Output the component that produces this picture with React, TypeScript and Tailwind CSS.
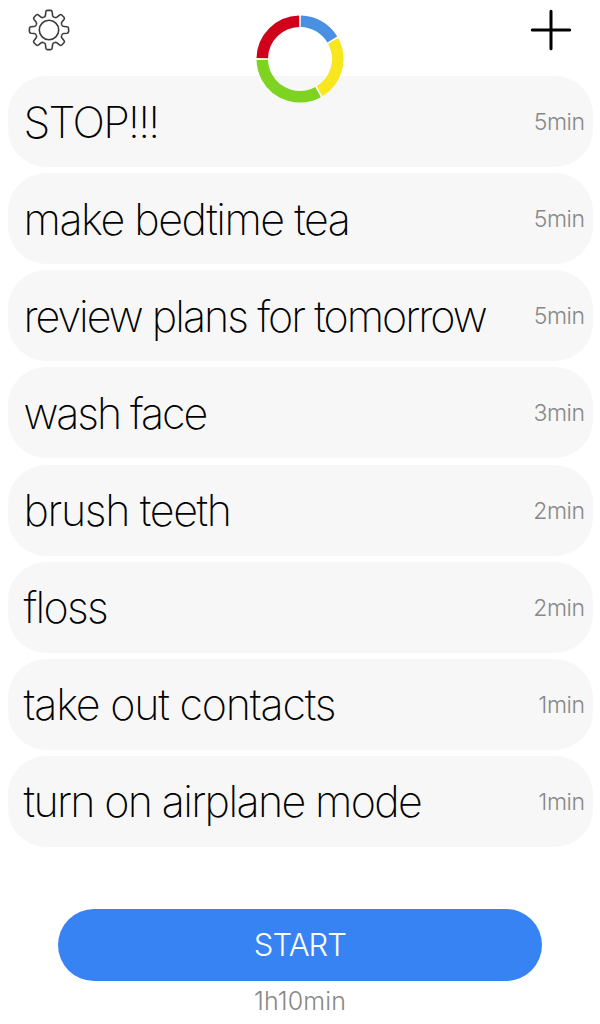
import React from 'react';
import clsx from 'clsx';

interface ITask {
  name: string;
  duration: string;
  tracking: string;
}

interface ISegment {
  color: string;
  start: number;
  end: number;
}

const tasks: ITask[] = [
  { name: 'STOP!!!', duration: '5min', tracking: 'tracking-[-1.7px]' },
  { name: 'make bedtime tea', duration: '5min', tracking: 'tracking-[-1.5px]' },
  { name: 'review plans for tomorrow', duration: '5min', tracking: 'tracking-[-1.98px]' },
  { name: 'wash face', duration: '3min', tracking: 'tracking-[-2.1px]' },
  { name: 'brush teeth', duration: '2min', tracking: 'tracking-[-1.35px]' },
  { name: 'floss', duration: '2min', tracking: 'tracking-[-1.7px]' },
  { name: 'take out contacts', duration: '1min', tracking: 'tracking-[-1.2px]' },
  { name: 'turn on airplane mode', duration: '1min', tracking: 'tracking-[-1.65px]' },
];

// degrees, clockwise from the top
const segments: ISegment[] = [
  { color: '#4a90e2', start: 0, end: 60 },
  { color: '#f8e71c', start: 60, end: 150 },
  { color: '#7ed321', start: 150, end: 270 },
  { color: '#d0021b', start: 270, end: 360 },
];

const teeth = [0, 45, 90, 135, 180, 225, 270, 315];

const GearIcon = () => (
  <svg viewBox="-22 -22 44 44" className="size-11" fill="none" stroke="#3c3c3c" strokeWidth="1.6">
    <circle r="9.7" />
    {teeth.map((angle) => (
      <path
        key={angle}
        transform={`rotate(${angle})`}
        d="M-5.25 -12.7C-4.2 -13.1 -3.6 -13.8 -3.5 -14.8L-3.2 -18Q-3 -19.6 -1.6 -19.6H1.6Q3 -19.6 3.2 -18L3.5 -14.8C3.6 -13.8 4.2 -13.1 5.25 -12.7"
      />
    ))}
  </svg>
);

const PlusIcon = () => (
  <svg viewBox="-22 -22 44 44" className="size-11" stroke="#000" strokeWidth="3" strokeLinecap="round">
    <path d="M-18.7 0H18.7M0 -18.7V18.7" />
  </svg>
);

const Ring = () => (
  <svg viewBox="-44 -44 88 88" className="size-[88px]" fill="none">
    <circle r="37.75" stroke="#fff" strokeWidth="11" />
    {segments.map(({ color, start, end }) => (
      <circle
        key={color}
        r="37.75"
        stroke={color}
        strokeWidth="11.5"
        pathLength={360}
        strokeDasharray={`${end - start - 2.6} 360`}
        transform={`rotate(${start - 88.7})`}
      />
    ))}
  </svg>
);

const TaskRow = ({ name, duration, tracking }: ITask) => (
  <li className="flex h-[91px] items-center justify-between rounded-[38px] bg-[#f7f7f7] pt-px pr-2 pl-4 whitespace-nowrap">
    <span className={clsx('text-[43px] leading-none font-extralight text-black', tracking)}>{name}</span>
    <span className="pt-px text-[23px] leading-none font-light tracking-[-0.02em] text-[#888]">{duration}</span>
  </li>
);

const App = () => {
  return (
    <main className="flex h-screen w-full flex-col overflow-hidden bg-white font-['Inter',sans-serif]">
      <header className="relative flex h-19 shrink-0 items-start justify-between pt-2 pr-[27px] pl-[27px]">
        <button type="button" aria-label="Settings">
          <GearIcon />
        </button>
        <div className="absolute top-[15px] left-1/2 -translate-x-1/2">
          <Ring />
        </div>
        <button type="button" aria-label="Add task">
          <PlusIcon />
        </button>
      </header>
      <ul className="flex flex-col gap-[6.14px] px-[7.5px]">
        {tasks.map((task) => (
          <TaskRow key={task.name} {...task} />
        ))}
      </ul>
      <footer className="mt-[62px] flex flex-col items-center">
        <button
          type="button"
          className="h-[72px] w-[484px] rounded-full bg-[#3883f4] text-[31px] leading-none font-light tracking-[-0.03em] text-white"
        >
          START
        </button>
        <p className="mt-2 text-[25px] leading-none font-light tracking-[0.005em] text-[#888]">1h10min</p>
      </footer>
    </main>
  );
};

export default App;
